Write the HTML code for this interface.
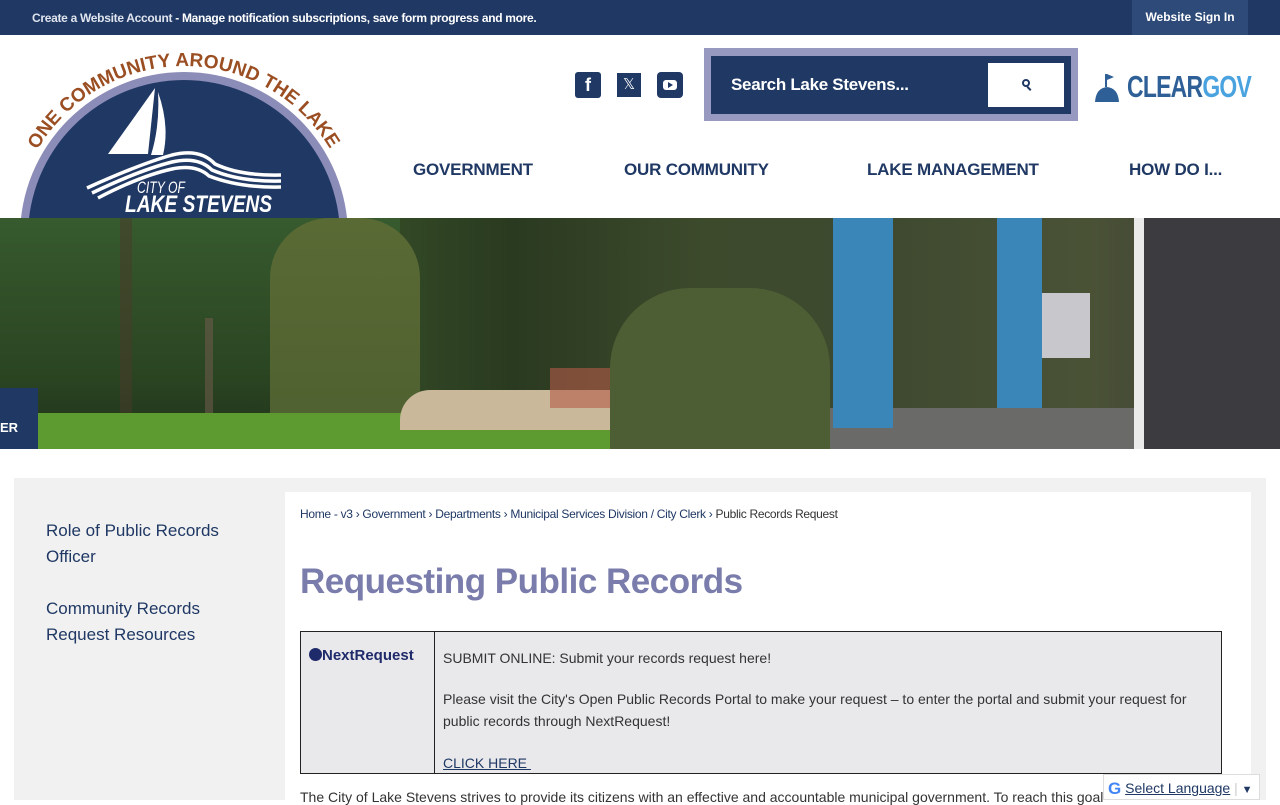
<!DOCTYPE html>
<html><head><meta charset="utf-8"><style>
*{margin:0;padding:0;box-sizing:border-box}
body{width:1280px;height:800px;overflow:hidden;background:#fff;font-family:"Liberation Sans",sans-serif;position:relative}
.abs{position:absolute}
.top{left:0;top:0;width:1280px;height:35px;background:#1f3864;color:#fff;font-size:12px;font-weight:bold}
.nav{font-size:17px;font-weight:bold;color:#1f3864;top:160px;letter-spacing:-0.2px}
a{color:#1f3864}
</style></head><body>
<div class="abs top">
 <div class="abs" style="left:32px;top:11px;letter-spacing:-0.3px"><span style="color:#e0e4ee">Create a Website Account</span> - Manage notification subscriptions, save form progress and more.</div>
 <div class="abs" style="left:1132px;top:0;width:116px;height:35px;background:#2e4a78;text-align:center;line-height:35px">Website Sign In</div>
</div>
<!-- logo -->
<svg class="abs" style="left:0;top:36px" width="370" height="182" viewBox="0 0 370 182">
 <defs><path id="arc" d="M37.4 114 A170 170 0 0 1 330.6 114"/></defs>
 <circle cx="184" cy="200" r="164" fill="#8c8cb8"/>
 <circle cx="184" cy="200" r="156" fill="#1f3864"/>
 <text font-family="Liberation Sans" font-weight="bold" font-size="19" fill="#9a4e22"><textPath href="#arc" textLength="352" lengthAdjust="spacing">ONE COMMUNITY AROUND THE LAKE</textPath></text>
 <path d="M155 52 L108 118 L148 118 Z" fill="#fff"/>
 <path d="M158 56 Q170 90 163 119 L151 119 Q160 90 158 56 Z" fill="#fff"/>
 <g fill="none" stroke="#fff" stroke-width="3.5">
  <path d="M87 152 Q140 128 172 119 Q200 112 215 128 Q240 140 281 139"/>
  <path d="M92 157 Q140 134 172 126 Q198 120 212 134 Q240 146 281 145"/>
  <path d="M98 162 Q140 140 172 133 Q196 128 209 140 Q240 152 281 151"/>
 </g>
 <text x="137" y="157" font-family="Liberation Sans" font-style="italic" font-size="17" fill="#fff" textLength="48" lengthAdjust="spacingAndGlyphs">CITY OF</text>
 <text x="125" y="176" font-family="Liberation Sans" font-weight="bold" font-style="italic" font-size="24" fill="#fff" textLength="147" lengthAdjust="spacingAndGlyphs">LAKE STEVENS</text>
</svg>
<!-- social -->
<div class="abs" style="left:575px;top:72px;width:26px;height:26px;background:#1f3864;border-radius:3px;color:#fff;font-weight:bold;font-size:18px;text-align:center;line-height:27px">f</div>
<div class="abs" style="left:617px;top:73px;width:24px;height:24px;background:#1f3864;color:#fff;font-size:15px;text-align:center;line-height:24px">𝕏</div>
<div class="abs" style="left:657px;top:72px;width:26px;height:26px;background:#1f3864;border-radius:4px"><div class="abs" style="left:6px;top:8px;width:14px;height:10px;background:#fff;border-radius:3px"></div><div class="abs" style="left:11px;top:10px;border-left:5px solid #1f3864;border-top:3px solid transparent;border-bottom:3px solid transparent"></div></div>
<!-- search -->
<div class="abs" style="left:704px;top:48px;width:374px;height:73px;background:#9799c0"></div>
<div class="abs" style="left:711px;top:56px;width:360px;height:58px;background:#1f3864"></div>
<div class="abs" style="left:731px;top:75px;color:#fff;font-size:17px;font-weight:bold;letter-spacing:-0.3px">Search Lake Stevens...</div>
<div class="abs" style="left:988px;top:63px;width:76px;height:44px;background:#fff"><div class="abs" style="left:34px;top:16px;width:8px;height:8px;border:2px solid #1f3864;border-radius:50%"></div><div class="abs" style="left:40px;top:23px;width:2px;height:5px;background:#1f3864;transform:rotate(-45deg)"></div></div>
<!-- cleargov -->
<svg class="abs" style="left:1094px;top:70px" width="160" height="36"><path d="M1 32 Q2 18 13 17 Q24 18 25 32Z" fill="#2e5f96"/><rect x="11" y="4" width="2" height="13" fill="#2e5f96"/><path d="M13 4 L20 7 L13 10Z" fill="#2e5f96"/></svg>
<div class="abs" style="left:1127px;top:69px;font-size:31px;font-weight:bold;letter-spacing:-1px;transform:scaleX(0.74);transform-origin:left;font-family:'Liberation Sans Narrow','Liberation Sans',sans-serif"><span style="color:#2e5f96">CLEAR</span><span style="color:#4aa3df">GOV</span></div>
<!-- nav -->
<div class="abs nav" style="left:413px">GOVERNMENT</div>
<div class="abs nav" style="left:624px">OUR COMMUNITY</div>
<div class="abs nav" style="left:867px">LAKE MANAGEMENT</div>
<div class="abs nav" style="left:1129px">HOW DO I...</div>
<!-- hero -->
<div class="abs" style="left:0;top:218px;width:1280px;height:231px;overflow:hidden;background:linear-gradient(90deg,#2d4a24,#3c5a2c 20%,#2a3a20 40%,#3d4a2c 55%,#3f4a30 70%,#4a5236 85%,#3a3a38)">
 <div class="abs" style="left:0;top:0;width:400px;height:231px;background:linear-gradient(180deg,#375a2e,#2a4422 70%,#1f3018)"></div>
 <div class="abs" style="left:120px;top:0;width:12px;height:200px;background:#4a3a2a;opacity:.5"></div>
 <div class="abs" style="left:205px;top:100px;width:8px;height:100px;background:#6a5a4a;opacity:.6"></div>
 <div class="abs" style="left:270px;top:0;width:150px;height:231px;background:linear-gradient(180deg,#5a6a35,#4e6030);border-radius:60px 60px 0 0"></div>
 <div class="abs" style="left:0;top:195px;width:700px;height:36px;background:#5d9a30"></div>
 <div class="abs" style="left:400px;top:172px;width:380px;height:40px;background:#c9b89a;border-radius:30px 30px 0 0"></div>
 <div class="abs" style="left:550px;top:150px;width:140px;height:40px;background:#b55a4a;opacity:.6"></div>
 <div class="abs" style="left:610px;top:70px;width:220px;height:161px;background:#4d5e34;border-radius:80px 80px 0 0"></div>
 <div class="abs" style="left:830px;top:190px;width:310px;height:41px;background:#6a6a68"></div>
 <div class="abs" style="left:833px;top:0;width:60px;height:210px;background:#3a86b8"></div>
 <div class="abs" style="left:997px;top:0;width:45px;height:190px;background:#3a86b8"></div>
 <div class="abs" style="left:1042px;top:75px;width:48px;height:65px;background:#c8c8cc"></div>
 <div class="abs" style="left:1134px;top:0;width:146px;height:231px;background:#3c3c40"></div>
 <div class="abs" style="left:1134px;top:0;width:10px;height:231px;background:#eaeaea"></div>
 <div class="abs" style="left:0;top:170px;width:38px;height:61px;background:#1f3864;color:#fff;font-size:13px;font-weight:bold;padding:32px 0 0 0">ER</div>
</div>
<!-- content -->
<div class="abs" style="left:14px;top:478px;width:1252px;height:322px;background:#f1f1f1"></div>
<div class="abs" style="left:285px;top:492px;width:966px;height:308px;background:#fff"></div>
<div class="abs" style="left:46px;top:518px;font-size:17px;line-height:26px;color:#1f3864">Role of Public Records<br>Officer<br><div style="height:26px"></div>Community Records<br>Request Resources</div>
<div class="abs" style="left:300px;top:507px;font-size:12px;color:#1f3864;letter-spacing:-0.3px;font-family:'Liberation Sans Narrow','Liberation Sans',sans-serif"><span>Home - v3</span> › Government › Departments › Municipal Services Division / City Clerk › <span style="color:#333">Public Records Request</span></div>
<div class="abs" style="left:300px;top:562px;font-size:35px;font-weight:bold;color:#7a7cab;letter-spacing:-0.5px">Requesting Public Records</div>
<div class="abs" style="left:300px;top:631px;width:922px;height:143px;border:1px solid #222;background:#e9e9ec">
 <div class="abs" style="left:133px;top:0;width:1px;height:141px;background:#222"></div>
 <div class="abs" style="left:8px;top:15px;font-size:15px;font-weight:bold;color:#1f2a6a"><span style="display:inline-block;width:13px;height:13px;border-radius:50%;background:#1f2a6a;vertical-align:-1px"></span>NextRequest</div>
 <div class="abs" style="left:142px;top:15px;font-size:14px;color:#333;line-height:22px;width:770px">SUBMIT ONLINE: Submit your records request here!<div style="height:19px"></div>Please visit the City's Open Public Records Portal to make your request – to enter the portal and submit your request for public records through NextRequest!<div style="height:20px"></div><u style="color:#1f3864">CLICK HERE&nbsp;</u></div>
</div>
<div class="abs" style="left:300px;top:789px;font-size:14px;color:#333;white-space:nowrap">The City of Lake Stevens strives to provide its citizens with an effective and accountable municipal government. To reach this goal</div>
<div class="abs" style="left:1103px;top:774px;width:157px;height:26px;background:#fff;border:1px solid #ddd;font-size:14px;padding:4px 0 0 4px;white-space:nowrap"><b style="color:#4285f4;font-size:17px;vertical-align:-1px">G</b> <u style="color:#1f3864">Select Language</u> <span style="color:#ccc">|</span> <span style="color:#1f3864;font-size:11px">▼</span></div>
</body></html>
